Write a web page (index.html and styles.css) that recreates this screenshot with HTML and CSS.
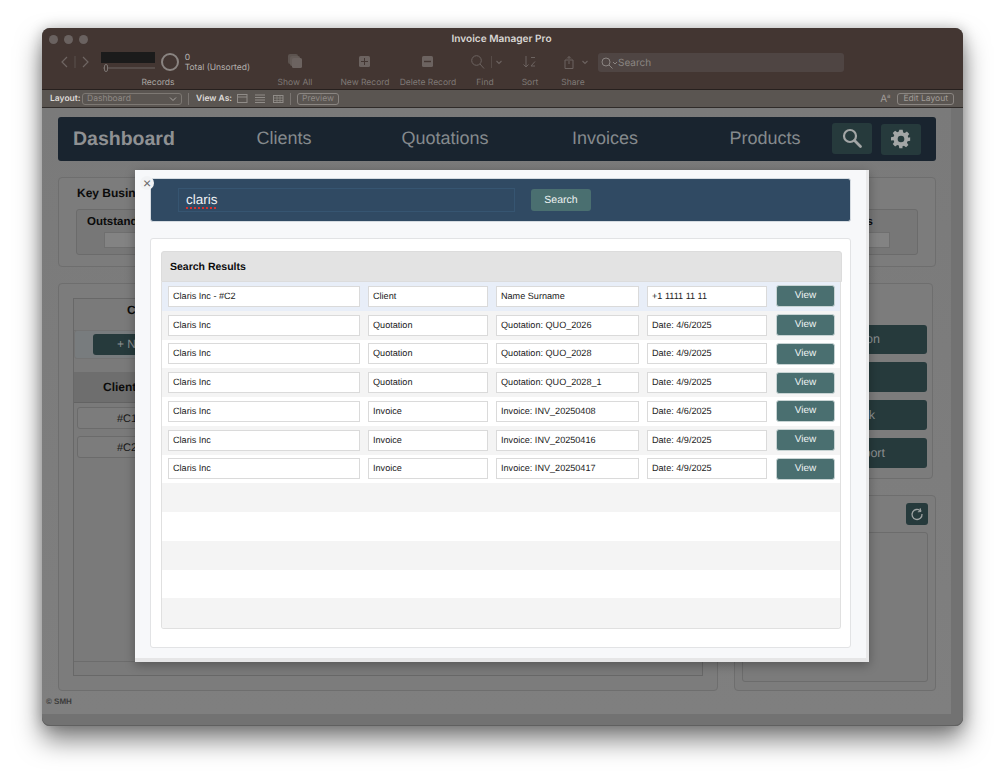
FILE: index.html
```html
<!DOCTYPE html>
<html lang="en">
<head>
<meta charset="utf-8">
<title>Invoice Manager Pro</title>
<link rel="stylesheet" href="styles.css">
</head>
<body>
<div class="window">
  <header class="titlebar">
    <div class="lights"><i></i><i></i><i></i></div>
    <div class="title">Invoice Manager Pro</div>
    <div class="toolbar">
      <div class="navarrows">
        <svg width="40" height="22" viewBox="0 0 40 22"><path d="M11 6l-5 5 5 5M27 6l5 5-5 5" fill="none" stroke="#6f6663" stroke-width="1.200"/><path d="M19 5v12" stroke="#5a504c"/></svg>
      </div>
      <div class="records">
        <div class="rec-top">
          <div class="rec-left"><div class="rec-box"></div><div class="rec-slider"><b></b></div></div>
          <div class="rec-ring"></div>
          <div class="rec-count"><span>0</span><span>Total (Unsorted)</span></div>
        </div>
        <div class="tool-label rec-label">Records</div>
      </div>
      <div class="tool t-show">
        <svg width="18" height="22" viewBox="0 0 18 22"><rect x="2" y="3" width="10" height="10" rx="2" fill="#5c534f"/><rect x="4" y="5" width="10" height="10" rx="2" fill="#645b57"/><rect x="6" y="7" width="10" height="10" rx="1.500" fill="#6c6360"/></svg>
        <div class="tool-label">Show All</div>
      </div>
      <div class="tool t-new">
        <svg width="16" height="22" viewBox="0 0 16 22"><rect x="2" y="5" width="11" height="11" rx="1.500" fill="#6c6360"/><path d="M7.500 7v7M4 10.500h7" stroke="#433632" stroke-width="1"/></svg>
        <div class="tool-label">New Record</div>
      </div>
      <div class="tool t-del">
        <svg width="16" height="22" viewBox="0 0 16 22"><rect x="2" y="5" width="11" height="11" rx="1.500" fill="#6c6360"/><path d="M4 10.500h7" stroke="#433632" stroke-width="1.400"/></svg>
        <div class="tool-label">Delete Record</div>
      </div>
      <div class="tool t-find">
        <svg width="40" height="22" viewBox="0 0 40 22"><circle cx="11.500" cy="9.500" r="4.800" fill="none" stroke="#6c6360" stroke-width="1"/><path d="M15 13l4 4.500" stroke="#6c6360" stroke-width="1"/><path d="M26.500 5v12" stroke="#574c48"/><path d="M31.500 10l2.500 2.500 2.500-2.500" fill="none" stroke="#6c6360" stroke-width="1.100"/></svg>
        <div class="tool-label">Find</div>
      </div>
      <div class="tool t-sort">
        <svg width="16" height="22" viewBox="0 0 16 22"><path d="M4 5v11M1.500 13.500L4 16l2.500-2.500" fill="none" stroke="#6c6360" stroke-width="1"/><path d="M9 6.500h4M9 15h4M13 10.500l-4 4.500" fill="none" stroke="#6c6360" stroke-width="1"/></svg>
        <div class="tool-label">Sort</div>
      </div>
      <div class="tool t-share">
        <svg width="40" height="22" viewBox="0 0 40 22"><path d="M15 9h-3v8.500h8V9h-3M16 13V5.500M14 7.500l2-2 2 2" fill="none" stroke="#6c6360" stroke-width="1"/><path d="M29.500 10l2.500 2.500 2.500-2.500" fill="none" stroke="#6c6360" stroke-width="1.100"/></svg>
        <div class="tool-label">Share</div>
      </div>
      <div class="top-search">
        <svg width="18" height="14" viewBox="0 0 18 14"><circle cx="6" cy="6" r="4" fill="none" stroke="#8b8582" stroke-width="1"/><path d="M9 9l3.500 3.500" stroke="#8b8582" stroke-width="1"/><path d="M13 6l2 2 2-2" fill="none" stroke="#8b8582" stroke-width="1"/></svg>
        <span>Search</span>
      </div>
    </div>
  </header>

  <div class="statusbar">
    <span class="st-label l1">Layout:</span>
    <div class="st-select"><span>Dashboard</span><svg width="8" height="6" viewBox="0 0 8 6"><path d="M1 1.500l3 3 3-3" fill="none" stroke="#a8a4a0"/></svg></div>
    <i class="st-sep"></i>
    <span class="st-label l2">View As:</span>
    <svg class="st-view" width="60" height="12" viewBox="0 0 60 12">
      <rect x=".5" y="1.500" width="9.500" height="8" fill="none" stroke="#908c88"/><path d="M1 4h9" stroke="#908c88"/>
      <path d="M18 2h10M18 4.500h10M18 7h10M18 9.500h10" stroke="#908c88"/>
      <rect x="36.500" y="2.500" width="9.500" height="7" fill="none" stroke="#908c88"/><path d="M37 5h9M37 7.500h9M40 3v6M43 3v6" stroke="#908c88" stroke-width=".7"/>
    </svg>
    <i class="st-sep st-sep2"></i>
    <div class="st-btn st-preview">Preview</div>
    <div class="st-right">
      <span class="st-aa">A<sup>a</sup></span>
      <div class="st-btn">Edit Layout</div>
    </div>
  </div>

  <div class="main">
    <div class="content">
      <nav class="nav">
        <span class="nav-home">Dashboard</span>
        <span class="nav-link n1">Clients</span>
        <span class="nav-link n2">Quotations</span>
        <span class="nav-link n3">Invoices</span>
        <span class="nav-link n4">Products</span>
        <div class="nav-btn b1">
          <svg width="22" height="22" viewBox="0 0 22 22"><circle cx="9" cy="9" r="6" fill="none" stroke="#a3a6a6" stroke-width="2.200"/><path d="M13.500 13.500l6 6" stroke="#a3a6a6" stroke-width="2.800" stroke-linecap="round"/></svg>
        </div>
        <div class="nav-btn b2">
          <svg width="20" height="20" viewBox="0 0 24 24"><path fill="#a3a6a6" fill-rule="evenodd" d="M10 1h4l.6 3.100 1.900.8 2.600-1.800 2.800 2.800-1.800 2.600.8 1.900L23 10v4l-3.100.6-.8 1.900 1.800 2.600-2.800 2.800-2.600-1.800-1.900.8L13.900 23h-4l-.5-3.100-1.900-.8-2.600 1.800-2.800-2.800 1.800-2.600-.8-1.900L0 13.900v-4l3.100-.5.800-1.900L2.100 4.900l2.800-2.800 2.600 1.800 1.900-.8zM12 8a4 4 0 1 0 0 8 4 4 0 0 0 0-8z"/></svg>
        </div>
      </nav>

      <section class="card key">
        <h3 class="key-title">Key Business Metrics</h3>
        <div class="metrics">
          <div class="metric m-first"><h4>Outstanding Invoices</h4><div class="metric-val"></div></div>
          <div class="metric"><h4>Open Quotations</h4><div class="metric-val"></div></div>
          <div class="metric"><h4>Paid Invoices</h4><div class="metric-val"></div></div>
          <div class="metric m-last"><h4>Products</h4><div class="metric-val"></div></div>
        </div>
      </section>

      <div class="lower">
        <section class="card left">
          <div class="panel">
            <div class="panel-inner">
              <div class="col">
                <h4 class="col-title">Clients</h4>
                <div class="col-tool"><div class="dark-btn new-btn">+ New</div></div>
                <div class="col-head">Client ID</div>
                <div class="cell">#C1</div>
                <div class="cell">#C2</div>
              </div>
            </div>
          </div>
        </section>
        <div class="right">
          <section class="card actions">
            <div class="dark-btn act a1">New Quotation</div>
            <div class="dark-btn act act2"></div>
            <div class="dark-btn act act2 a3">Feedback</div>
            <div class="dark-btn act act2 a4">Report</div>
          </section>
          <section class="card notes">
            <div class="notes-top">
              <div class="refresh">
                <svg width="14" height="14" viewBox="0 0 14 14"><path d="M10.800 4.200A5 5 0 1 0 12 7" fill="none" stroke="#9fa3a3" stroke-width="1.300"/><path d="M10.200 1.200l.8 3.300-3.200.3" fill="none" stroke="#9fa3a3" stroke-width="1"/></svg>
              </div>
            </div>
            <div class="notes-box"></div>
          </section>
        </div>
      </div>
      <div class="copyright">© SMH</div>
    </div>
    <div class="gutter"></div>
  </div>
  <div class="footer-band"></div>

  <div class="modal">
    <div class="searchbar">
      <div class="search-input"><span class="misspelt">claris</span></div>
      <div class="search-go">Search</div>
    </div>
    <div class="close">×</div>
    <div class="results">
      <div class="results-head">Search Results</div>
      <div class="list">
        <div class="row hi">
          <div class="f f1">Claris Inc - #C2</div><div class="f f2">Client</div><div class="f f3">Name Surname</div><div class="f f4">+1 1111 11 11</div><div class="view">View</div>
        </div>
        <div class="row alt">
          <div class="f f1">Claris Inc</div><div class="f f2">Quotation</div><div class="f f3">Quotation: QUO_2026</div><div class="f f4">Date: 4/6/2025</div><div class="view">View</div>
        </div>
        <div class="row">
          <div class="f f1">Claris Inc</div><div class="f f2">Quotation</div><div class="f f3">Quotation: QUO_2028</div><div class="f f4">Date: 4/9/2025</div><div class="view">View</div>
        </div>
        <div class="row alt">
          <div class="f f1">Claris Inc</div><div class="f f2">Quotation</div><div class="f f3">Quotation: QUO_2028_1</div><div class="f f4">Date: 4/9/2025</div><div class="view">View</div>
        </div>
        <div class="row">
          <div class="f f1">Claris Inc</div><div class="f f2">Invoice</div><div class="f f3">Invoice: INV_20250408</div><div class="f f4">Date: 4/6/2025</div><div class="view">View</div>
        </div>
        <div class="row alt">
          <div class="f f1">Claris Inc</div><div class="f f2">Invoice</div><div class="f f3">Invoice: INV_20250416</div><div class="f f4">Date: 4/9/2025</div><div class="view">View</div>
        </div>
        <div class="row">
          <div class="f f1">Claris Inc</div><div class="f f2">Invoice</div><div class="f f3">Invoice: INV_20250417</div><div class="f f4">Date: 4/9/2025</div><div class="view">View</div>
        </div>
        <div class="row alt"></div>
        <div class="row"></div>
        <div class="row alt"></div>
        <div class="row"></div>
        <div class="row alt"></div>
      </div>
    </div>
  </div>
</div>
</body>
</html>
```

FILE: styles.css
```css
* { box-sizing: border-box; }
html, body { margin: 0; padding: 0; height: 100%; overflow: hidden; background: #fff; }
body { padding: 28px 0 0 42px; font-family: "Liberation Sans", Arial, sans-serif; text-rendering: geometricPrecision; }
h3, h4 { margin: 0; }

.window {
  position: relative;
  width: 921px;
  height: 698px;
  border-radius: 8px;
  background: #7b7b7b;
  display: flex;
  flex-direction: column;
  overflow: visible;
  box-shadow: 0 14px 26px rgba(0,0,0,.5), 0 0 14px rgba(0,0,0,.22), inset 0 0 0 1px rgba(0,0,0,.12);
}

/* title bar */
.titlebar {
  height: 62px;
  background: #433632;
  border-radius: 8px 8px 0 0;
  border-bottom: 1px solid #27201e;
  flex: none;
  position: relative;
  font-family: Inter, "Liberation Sans", sans-serif;
}
.lights { position: absolute; left: 7px; top: 7px; display: flex; gap: 6px; }
.lights i { width: 9px; height: 9px; border-radius: 50%; background: #6a6260; }
.title {
  height: 23px;
  line-height: 23px;
  padding-right: 2px;
  text-align: center;
  font-size: 10.100px;
  font-weight: 600;
  color: #d9d6d4;
}
.toolbar { display: flex; padding-left: 14px; align-items: flex-start; }
.navarrows { width: 40px; height: 22px; margin-right: 5px; }
.tool { display: flex; flex-direction: column; align-items: center; flex: none; }
.tool svg { display: block; height: 22px; }
.tool-label { margin-top: 4px; height: 12px; line-height: 12px; font-size: 8.500px; color: #7f7976; white-space: nowrap; }
.records { width: 149px; margin-right: 15px; flex: none; }
.rec-top { display: flex; height: 22px; }
.rec-left { width: 54px; margin-right: 6px; }
.rec-box { width: 54px; height: 11px; margin-top: 1px; background: #1b1b1b; }
.rec-slider { position: relative; margin-top: 4px; height: 2px; width: 52px; margin-left: 2px; background: #574d4a; }
.rec-slider b { position: absolute; left: 1px; top: -3px; width: 4px; height: 8px; border: 1px solid #7b7572; border-radius: 2px; background: #433632; }
.rec-ring { width: 18px; height: 18px; margin-top: 2px; margin-right: 6px; border: 2px solid #8a8481; border-radius: 50%; }
.rec-count { display: flex; flex-direction: column; font-size: 8.500px; line-height: 10px; color: #b5b1ae; padding-top: 2px; white-space: nowrap; }
.rec-label { width: 114px; text-align: center; color: #aaa6a3; margin-top: 4px; }
.t-show { width: 60px; }
.t-new { width: 64px; margin-left: 8px; }
.t-del { width: 62px; }
.t-find { width: 40px; margin-left: 6px; }
.t-sort { width: 40px; margin-left: 5px; }
.t-share { width: 40px; margin-left: 3px; }
.top-search {
  width: 246px; height: 19px; margin: 2px 0 0 5px; padding-left: 2px;
  background: #4f4543; border-radius: 3px;
  display: flex; align-items: center;
  font-size: 10px; color: #8b8582;
}
.top-search svg { flex: none; }

/* layout bar */
.statusbar {
  height: 18px;
  flex: none;
  background: #5a5551;
  border-bottom: 1px solid #2f2b29;
  display: flex;
  align-items: center;
  padding: 1px 9px 0 8px;
  font-family: Inter, "Liberation Sans", sans-serif;
  font-size: 8.500px;
}
.st-label { font-weight: 600; color: #dedbd8; white-space: nowrap; flex: none; }
.l1 { width: 32px; }
.l2 { width: 33px; }
.st-select {
  width: 100px; height: 12px; padding: 0 4px 0 4px; flex: none;
  border: 1px solid #7d7873; border-radius: 3px;
  display: flex; justify-content: space-between; align-items: center;
  color: #8f8a86;
}
.st-sep { width: 1px; height: 12px; background: #7a7571; margin: 0 7px 0 6px; flex: none; }
.st-view { margin-left: 8px; flex: none; }
.st-sep2 { margin: 0 6px 0 -7px; }
.st-btn {
  height: 12px; line-height: 10px; padding: 0 5px;
  border: 1px solid #8a8581; border-radius: 3px;
  color: #a19c98; white-space: nowrap;
}
.st-preview { width: 42px; text-align: center; padding: 0; color: #8f8a86; flex: none; }
.st-right { margin-left: auto; display: flex; align-items: center; gap: 7px; }
.st-aa { font-size: 10px; color: #a19c98; line-height: 12px; }
.st-aa sup { font-size: 6px; line-height: 0; }

/* dimmed dashboard */
.main { flex: 1; display: flex; min-height: 0; }
.content { flex: 1; padding: 9px 15px 0 16px; background: linear-gradient(#7a7a7a, #7f7f7f); min-width: 0; }
.gutter { width: 12px; flex: none; background: #727272; }
.footer-band { height: 12px; flex: none; background: #727272; border-radius: 0 0 8px 8px; box-shadow: inset 0 -1px 0 #606060; }

.nav {
  height: 44px;
  background: #19242f;
  border-radius: 3px;
  display: flex;
  align-items: center;
  padding-left: 15px;
  color: #858a8d;
}
.nav-home { width: 102px; font-size: 19.500px; font-weight: 700; color: #8f9193; white-space: nowrap; }
.nav-link { font-size: 18px; text-align: center; white-space: nowrap; margin-top: -2px; }
.n1 { width: 56px; margin-left: 81px; }
.n2 { width: 88px; margin-left: 89px; }
.n3 { width: 66px; margin-left: 83px; }
.n4 { width: 72px; margin-left: 91px; }
.nav-btn { width: 40px; height: 31px; border-radius: 3px; background: #263a3c; display: flex; align-items: center; justify-content: center; }
.b1 { margin-left: 31px; margin-top: -2px; }
.b2 { margin-left: 9px; }

.card { border: 1px solid #6e6e6e; border-radius: 4px; background: #7c7c7c; }
.key { height: 90px; margin-top: 16px; padding: 8px 17px 0; }
.key-title { font-size: 12px; line-height: 14px; color: #0b0b0b; padding-left: 1px; }
.metrics { display: grid; grid-template-columns: repeat(4, 1fr); gap: 12px; margin-top: 9px; }
.metric { height: 46px; border: 1px solid #6b6b6b; border-radius: 3px; background: #777; position: relative; }
.metric h4 { font-size: 11.500px; line-height: 14px; color: #0b0b0b; padding: 5px 0 0; text-align: center; white-space: nowrap; }
.m-first h4 { text-align: left; padding-left: 10px; }
.m-last h4 { text-align: right; padding-right: 44px; }
.metric-val { height: 16px; margin: 3px 27px 0; background: #838383; border: 1px solid #6f6f6f; }

.lower { display: flex; gap: 16px; margin-top: 16px; height: 408px; }
.left { width: 660px; padding: 14px; }
.panel { height: 378px; border: 1px solid #686868; background: #7a7a7a; }
.panel-inner { height: 363px; border-bottom: 1px solid #6c6c6c; }
.col { width: 146px; }
.col-title { height: 32px; line-height: 20px; padding-top: 1px; text-align: center; font-size: 12px; color: #0b0b0b; border-bottom: 1px solid #6f6f6f; }
.col-tool { height: 29px; margin-top: -1px; padding: 3px 0 0 18px; background: #787c7e; border: 1px solid #737373; border-radius: 3px; }
.dark-btn { background: #263a3c; border-radius: 3px; color: #8b8f90; font-size: 12px; text-align: center; }
.new-btn { height: 21px; line-height: 21px; text-align: left; padding-left: 24px; }
.col-head { height: 31px; line-height: 30px; margin-top: 13px; background: #6e6e6e; border-bottom: 1px solid #636363; padding-left: 29px; font-weight: 700; font-size: 12px; color: #0b0b0b; }
.cell { height: 22px; line-height: 22px; margin: 4px 0 7px 3px; border: 1px solid #6b6b6b; border-radius: 3px; background: #7c7c7c; padding-left: 39px; font-size: 11px; color: #161616; }

.right { width: 202px; display: flex; flex-direction: column; gap: 16px; }
.actions { height: 196px; margin-right: 3px; padding: 41px 5px 0 7px; }
.act { height: 29px; line-height: 29px; margin-bottom: 8px; font-size: 12.500px; text-align: right; }
.a1 { padding-right: 47px; }
.a3 { padding-right: 52px; }
.a4 { padding-right: 42px; }
.act2 { height: 30px; line-height: 30px; }
.notes { flex: 1; padding: 7px; }
.notes-top { height: 29px; display: flex; justify-content: flex-end; }
.refresh { width: 22px; height: 22px; border-radius: 3px; background: #263a3c; display: flex; align-items: center; justify-content: center; }
.notes-box { height: 150px; border: 1px solid #6c6c6c; border-radius: 3px; background: #7b7b7b; }
.copyright { margin: 6px 0 0 -12px; font-size: 8px; line-height: 10px; font-weight: 700; color: #3c3c3c; }

/* modal */
.modal {
  position: absolute;
  left: 93px;
  top: 142px;
  width: 734px;
  height: 492px;
  padding: 8px 15px 14px;
  background: #f7f8fa;
  border-right: 3px solid #e9e9ea;
  border-bottom: 4px solid #e6e6e7;
  box-shadow: 0 3px 10px rgba(0,0,0,.3);
}
.close {
  position: absolute; left: 5px; top: 6px; width: 14px; height: 14px;
  border-radius: 50%; background: #f2f3f5;
  color: #666; font-size: 14px; line-height: 14px; text-align: center;
}
.searchbar {
  height: 44px;
  width: 701px;
  background: #304a63;
  border-radius: 3px;
  display: flex;
  align-items: center;
  padding-left: 27px;
  border: 1px solid #d5dbe1;
}
.search-input {
  width: 337px; height: 24px; padding-left: 7px;
  border: 1px solid #365571;
  font-size: 13.500px; line-height: 21px; color: #eef1f4;
}
.misspelt { text-decoration: underline dotted #d8322f 1.500px; text-underline-offset: 3px; }
.search-go {
  width: 60px; height: 22px; margin-left: 16px; border-radius: 3px;
  background: #4a6f70; color: #eef3f3; font-size: 10.500px; line-height: 22px; text-align: center;
}
.results {
  width: 701px;
  height: 410px;
  margin-top: 16px;
  padding: 12px 9px 0 10px;
  background: #fff;
  border: 1px solid #e2e3e5;
  border-radius: 3px;
}
.results-head {
  height: 31px; width: 681px; padding-left: 8px;
  background: #e3e3e3; border: 1px solid #dcdcdc; border-radius: 3px 3px 0 0;
  font-size: 10.500px; font-weight: 700; line-height: 30px; color: #0c0c0c;
}
.list { width: 680px; height: 347px; display: flex; flex-direction: column; border: 1px solid #e0e0e0; border-top: 0; border-radius: 0 0 3px 3px; overflow: hidden; }
.row { height: 28.750px; flex: none; display: flex; align-items: center; padding-left: 6px; gap: 8px; background: #fff; }
.row:last-child { flex: 1; }
.row.alt { background: #f4f4f4; }
.row.hi { background: #e8eef8; }
.f {
  height: 21px; padding-left: 4px;
  background: #fff; border: 1px solid #dadada;
  font-size: 9.100px; line-height: 19px; color: #222; white-space: nowrap;
}
.f1 { width: 192px; }
.f2 { width: 120px; }
.f3 { width: 143px; }
.f4 { width: 120px; }
.view {
  width: 59px; height: 22px; border-radius: 3px; margin-left: 1px;
  background: #4a6f70; border: 1px solid #c8d4d4;
  color: #eef3f3; font-size: 10px; line-height: 20px; text-align: center;
}
```
